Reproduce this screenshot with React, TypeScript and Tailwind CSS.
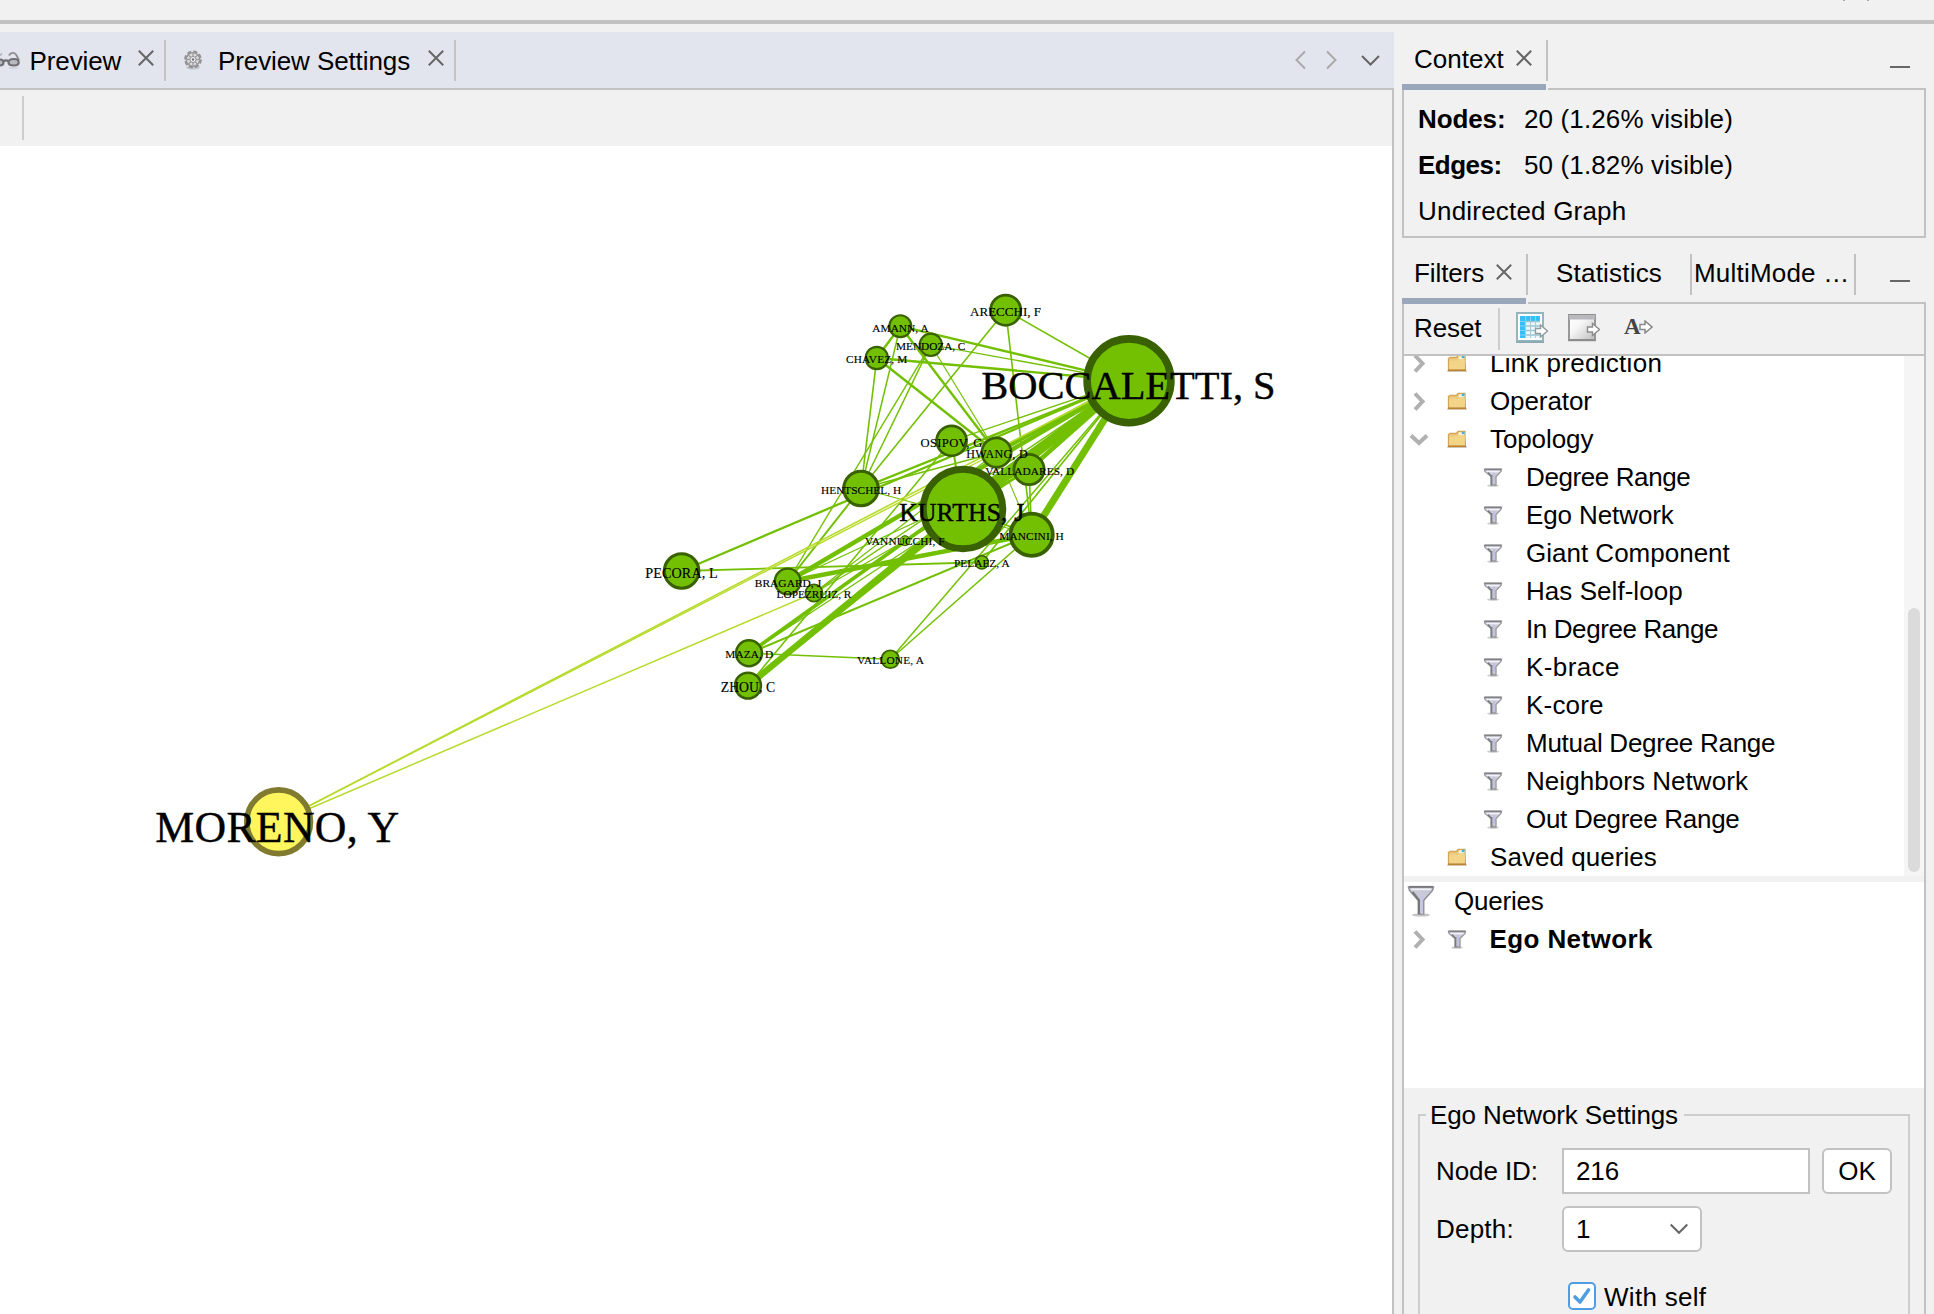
import React from "react";

/* ---------- graph data ---------- */

type GraphNode = {
  id: string;
  x: number;
  y: number;
  r: number;
  stroke: number;
  label: string;
  left: number;
  right: number;
  base: number;
  size: number;
};

const NODES: GraphNode[] = [
  { id: "van", x: 905, y: 540.7, r: 5.5, stroke: 1, label: "VANNUCCHI, F", left: 865, right: 944.5, base: 545.2, size: 11.3 },
  { id: "pel", x: 981.8, y: 562.3, r: 7.4, stroke: 1.5, label: "PELAEZ, A", left: 954, right: 1009.5, base: 567.2, size: 11.3 },
  { id: "are", x: 1005.7, y: 310.2, r: 16.5, stroke: 2.8, label: "ARECCHI, F", left: 970, right: 1041, base: 316.2, size: 13 },
  { id: "ama", x: 900.3, y: 326.2, r: 12, stroke: 2.1, label: "AMANN, A", left: 872.3, right: 928.5, base: 331.5, size: 11.3 },
  { id: "men", x: 930.8, y: 344.8, r: 12.2, stroke: 2.1, label: "MENDOZA, C", left: 896, right: 965.3, base: 350, size: 11.3 },
  { id: "cha", x: 876.8, y: 358, r: 12.2, stroke: 2.1, label: "CHAVEZ, M", left: 846, right: 907.2, base: 363.3, size: 11.3 },
  { id: "osi", x: 951.6, y: 440.8, r: 16.3, stroke: 2.7, label: "OSIPOV, G", left: 920.6, right: 982.3, base: 446.7, size: 12.6 },
  { id: "hwa", x: 996.5, y: 452.5, r: 16, stroke: 2.7, label: "HWANG, D", left: 966.3, right: 1027.5, base: 458.3, size: 12 },
  { id: "val", x: 1029, y: 469.5, r: 16.5, stroke: 2.8, label: "VALLADARES, D", left: 985.3, right: 1074, base: 475, size: 11.3 },
  { id: "hen", x: 861, y: 488.5, r: 18.8, stroke: 3.1, label: "HENTSCHEL, H", left: 821, right: 901, base: 494, size: 11.3 },
  { id: "pec", x: 681.6, y: 571, r: 18.8, stroke: 3.1, label: "PECORA, L", left: 645.3, right: 717.5, base: 577.7, size: 14.2 },
  { id: "bra", x: 787.7, y: 581.5, r: 14, stroke: 2.3, label: "BRAGARD, J", left: 754.8, right: 821, base: 587.3, size: 11.4 },
  { id: "lop", x: 814, y: 593, r: 9.5, stroke: 1.7, label: "LOPEZRUIZ, R", left: 776.6, right: 851.3, base: 597.7, size: 11.3 },
  { id: "maz", x: 749, y: 653.3, r: 14.2, stroke: 2.5, label: "MAZA, D", left: 725.3, right: 773, base: 658.3, size: 11.3 },
  { id: "zho", x: 748, y: 685.6, r: 14.2, stroke: 2.5, label: "ZHOU, C", left: 720.7, right: 775, base: 692, size: 13.7 },
  { id: "vln", x: 890.3, y: 659.3, r: 9.8, stroke: 1.8, label: "VALLONE, A", left: 857, right: 923.7, base: 664.4, size: 11.3 },
  { id: "kur", x: 963, y: 509, r: 43.3, stroke: 7, label: "KURTHS, J", left: 899.3, right: 1024, base: 521.3, size: 25.5 },
  { id: "man", x: 1031.7, y: 534.7, r: 23, stroke: 3.8, label: "MANCINI, H", left: 999.3, right: 1063.7, base: 540.3, size: 11.4 },
  { id: "boc", x: 1129, y: 380.8, r: 45.7, stroke: 7.6, label: "BOCCALETTI, S", left: 981.3, right: 1275.5, base: 399.3, size: 40.5 },
  { id: "mor", x: 278.6, y: 821.7, r: 34.7, stroke: 5.7, label: "MORENO, Y", left: 155.3, right: 399, base: 841.7, size: 43.8 },
];

const EDGES: [string, string, number][] = [
  ["are", "boc", 1.6],
  ["are", "man", 1.6],
  ["are", "hen", 1.6],
  ["ama", "boc", 2.4],
  ["ama", "cha", 2.4],
  ["ama", "hwa", 2.4],
  ["ama", "hen", 1.5],
  ["men", "boc", 1.3],
  ["men", "hwa", 1.2],
  ["men", "hen", 1.5],
  ["men", "bra", 1.4],
  ["cha", "boc", 2.4],
  ["cha", "hwa", 2.4],
  ["cha", "hen", 1.6],
  ["osi", "boc", 1.3],
  ["osi", "kur", 2],
  ["osi", "zho", 1.5],
  ["hwa", "boc", 4],
  ["hwa", "hen", 1.4],
  ["hwa", "man", 1.1],
  ["hwa", "lop", 1.2],
  ["val", "boc", 4.5],
  ["val", "kur", 2.4],
  ["val", "man", 1.6],
  ["val", "bra", 1.2],
  ["hen", "boc", 2.4],
  ["hen", "bra", 2],
  ["hen", "man", 1.1],
  ["kur", "boc", 9.5],
  ["kur", "zho", 6.5],
  ["kur", "man", 1.8],
  ["man", "boc", 7],
  ["man", "bra", 4.5],
  ["man", "maz", 2.1],
  ["man", "vln", 1.5],
  ["pel", "boc", 1.7],
  ["pel", "pec", 1.9],
  ["van", "boc", 1.4],
  ["pec", "boc", 2.3],
  ["bra", "boc", 4.4],
  ["lop", "boc", 1.4],
  ["lop", "val", 1.2],
  ["maz", "boc", 3.8],
  ["maz", "val", 1.2],
  ["maz", "vln", 1.5],
  ["zho", "boc", 3.8],
  ["vln", "boc", 1.5],
  ["mor", "boc", 1.6],
  ["mor", "hwa", 1.4],
  ["mor", "lop", 1.5],
];

const byId = Object.fromEntries(NODES.map((n) => [n.id, n]));

function Graph() {
  return (
    <svg width={1392} height={1168} viewBox="0 146 1392 1168" className="block">
      {EDGES.map(([a, b, w]) => (
        <line
          key={a + b}
          x1={byId[a].x}
          y1={byId[a].y}
          x2={byId[b].x}
          y2={byId[b].y}
          strokeWidth={w}
          stroke={a === "mor" ? "#b7db2c" : "#73c003"}
        />
      ))}
      {NODES.map((n) => (
        <circle
          key={n.id}
          cx={n.x}
          cy={n.y}
          r={n.r - n.stroke / 2}
          fill={n.id === "mor" ? "#fff65d" : "#73c003"}
          stroke={n.id === "mor" ? "#807b2e" : "#396001"}
          strokeWidth={n.stroke}
        />
      ))}
      {NODES.map((n) => (
        <text
          key={n.id}
          x={n.left}
          y={n.base}
          textLength={n.right - n.left}
          fontSize={n.size}
          fill="#000"
          stroke="#000"
          strokeWidth={n.size > 20 ? 0.4 : 0.15}
          fontFamily='"Liberation Serif", "Times New Roman", serif'
        >
          {n.label}
        </text>
      ))}
    </svg>
  );
}

/* ---------- icons ---------- */

const CloseIcon = () => (
  <svg width="16" height="16" viewBox="0 0 16 16" className="shrink-0">
    <path d="M0.8 0.8 15.2 15.2M15.2 0.8 0.8 15.2" stroke="#666" strokeWidth="2" fill="none" />
  </svg>
);

const GlassesIcon = () => (
  <svg width="20" height="20" viewBox="0 0 20 20" className="shrink-0">
    <path d="M9 5.5C10.5 2.5 14 2 16 4.5l3 5.500" stroke="#8b8b90" strokeWidth="1.800" fill="none" />
    <path d="M0 5.500 2 3.500" stroke="#aaa" strokeWidth="1.500" fill="none" />
    <path d="M8.500 12.500c0-3 2-3.500 5.200-3.500s5 .8 5 3.200-2 3.300-5 3.300-5.200-.5-5.200-3zM0 9.500c2 0 3.500 1 3.500 3S2 15.500 0 15.500M3.500 11.500c1.500-1.500 3.500-1.500 5 0" stroke="#6f6f75" strokeWidth="2.200" fill="#b9bbc1" />
    <path d="M9 18h9" stroke="#ced1d8" strokeWidth="1.500" />
  </svg>
);

const GearIcon = () => (
  <svg width="20" height="20" viewBox="0 0 20 20" className="shrink-0">
    <ellipse cx="10" cy="17.500" rx="7" ry="2" fill="#c6c8cf" />
    <circle cx="10" cy="9.500" r="7.600" fill="none" stroke="#939397" strokeWidth="2.600" strokeDasharray="4 1.970" />
    <circle cx="10" cy="9.500" r="6.800" fill="#dcdcde" stroke="#939397" strokeWidth="1.300" />
    <path d="M10 3v13M3.500 9.500h13M5.400 4.900l9.200 9.200M14.600 4.900 5.400 14.100" stroke="#a0a0a4" strokeWidth="1.400" />
    <circle cx="10" cy="9.500" r="3" fill="#f3f3f3" stroke="#929296" />
    <circle cx="10" cy="9.500" r="1.200" fill="#6f6f73" />
  </svg>
);

const FolderIcon = () => (
  <svg width="20" height="20" viewBox="0 0 20 20" className="shrink-0">
    <path d="M0 18.300h20" stroke="#d9d5cf" strokeWidth="1.400" />
    <path d="M1.500 5.500 3 4.500h6.500L11 2.500h7v5l.5 10h-17z" fill="#eecb80" stroke="#d3a657" strokeWidth="1.300" />
    <path d="M11.800 3.300h5.600v3h-5.600z" fill="#fbf3da" />
    <path d="M14.800 2.800h2.700v2.400h-2.700z" fill="#37b6e6" />
    <path d="M2.200 7.800h8.500l1.500-1.300h5.600v9.500H2.200z" fill="#f3d588" />
    <path d="M1 17.300h18" stroke="#b98339" strokeWidth="1.500" />
  </svg>
);

const FunnelIcon = () => (
  <svg width="20" height="20" viewBox="0 0 20 20" className="shrink-0">
    <ellipse cx="10" cy="18.600" rx="6" ry="1.200" fill="#cbcbcb" />
    <path d="M1.500 2.500h17l-.5 2-5 5v8.500H8V9.500l-6-5z" fill="#cdccda" stroke="#97979c" strokeWidth="1.300" />
    <path d="M3.500 4.600h13" stroke="#f4f4f8" strokeWidth="1.400" />
    <path d="M1.500 2.200h17" stroke="#7f7f84" strokeWidth="1.400" />
    <path d="M8.600 8v10M5 5.500l3.500 4" stroke="#7b7b82" strokeWidth="1.600" fill="none" />
    <path d="M11 6v11" stroke="#c3c1e0" strokeWidth="2" />
  </svg>
);

const BigFunnelIcon = () => (
  <svg width="28" height="32" viewBox="0 0 28 32" className="shrink-0">
    <ellipse cx="14" cy="30" rx="9" ry="1.600" fill="#c4c4c4" />
    <path d="M1.500 2h25l-1 3.500-8.800 10V29h-5.400V15.500L2.500 5.500z" fill="#c9c9d5" stroke="#8e8e93" strokeWidth="1.500" />
    <path d="M2 1.800h24" stroke="#77777c" strokeWidth="1.800" />
    <path d="M4 4.400h20" stroke="#f0f0f5" strokeWidth="1.600" />
    <path d="M5.500 7 12 15v14" stroke="#75757c" strokeWidth="2" fill="none" />
    <path d="M15 7v22" stroke="#c7c5e6" strokeWidth="2.200" />
  </svg>
);

const ChevronRight = () => (
  <svg width="20" height="20" viewBox="0 0 20 20" className="shrink-0">
    <path d="M6 2.500 13.500 10.500 6 18.500" stroke="#b0b0b0" strokeWidth="4" fill="none" />
  </svg>
);

const ChevronDown = () => (
  <svg width="20" height="20" viewBox="0 0 20 20" className="shrink-0">
    <path d="M2 6.500 10 14 18 6.500" stroke="#b0b0b0" strokeWidth="4" fill="none" />
  </svg>
);

const ARROW = "M0 3.500h5V0l7 6-7 6V8.500H0z";

const TableIcon = () => (
  <svg width="32" height="32" viewBox="0 0 32 32" className="shrink-0">
    <path d="M1 1h26v28H1z" fill="#fff" stroke="#94b5bb" strokeWidth="2" />
    <path d="M0 30.300h28" stroke="#86a9b0" strokeWidth="1.400" />
    <path d="M4 4h20v22H4z" fill="#eef8fb" />
    <path d="M4 4h20v5H4zM4 4h5v22H4z" fill="#35c0f5" />
    <path d="M9 9.500h15M9 14h15M9 18.500h15M9 23h15" stroke="#9cc3d0" strokeWidth="1.400" />
    <path d="M4 9.500h5M4 14h5M4 18.500h5M4 23h5M9.500 4v5M14.500 4v5M19.500 4v5" stroke="#7fd5f7" strokeWidth="1" />
    <path d="M9.500 9v17M14.500 9v17M19.500 9v17" stroke="#a9cbd6" strokeWidth="1.100" />
    <path d={ARROW} transform="translate(19.500 13)" fill="#fff" stroke="#8f9b9e" strokeWidth="1.400" />
  </svg>
);

const WindowIcon = () => (
  <svg width="32" height="32" viewBox="0 0 32 32" className="shrink-0">
    <defs>
      <linearGradient id="pane" x1="0" y1="0" x2="1" y2="1">
        <stop offset="0" stopColor="#fff" />
        <stop offset="0.400" stopColor="#f6f6f6" />
        <stop offset="1" stopColor="#bdbdbd" />
      </linearGradient>
    </defs>
    <path d="M1 3h26v25H1z" fill="url(#pane)" stroke="#8f8f8f" strokeWidth="1.800" />
    <path d="M1 3h26v4.500H1z" fill="#b9b9bd" />
    <path d="M0 28.500h28" stroke="#8b8b8b" strokeWidth="1.400" />
    <path d={ARROW} transform="translate(19.500 11.500)" fill="#fff" stroke="#8c8c8c" strokeWidth="1.400" />
  </svg>
);

const RenameIcon = () => (
  <span className="flex h-8 w-8 items-center">
    <span className="w-[15px] font-[Liberation_Serif] text-[23px] leading-8 font-bold tracking-[-1px] text-[#444]">A</span>
    <svg width="14" height="14" viewBox="-1 -1 14 14" className="shrink-0">
      <path d={ARROW} fill="#fff" stroke="#8a8a8a" strokeWidth="1.500" />
    </svg>
  </span>
);

/* ---------- building blocks ---------- */

const Sep = ({ className = "" }: { className?: string }) => (
  <div className={`w-0.5 shrink-0 bg-[#c2c2c2] ${className}`} />
);

const MinimizeMark = ({ className = "" }: { className?: string }) => (
  <div className={`h-0.5 w-5 bg-[#666] ${className}`} />
);

type FolderProps = { label: string; tracking?: string; open?: boolean; leaf?: boolean };

function FolderRow({ label, tracking = "", open, leaf }: FolderProps) {
  return (
    <div className="flex h-[38px] shrink-0 items-center pl-[5px]">
      <div className="w-[38px]">{leaf ? null : open ? <ChevronDown /> : <ChevronRight />}</div>
      <FolderIcon />
      <span className={`ml-[23px] ${tracking}`}>{label}</span>
    </div>
  );
}

const FilterRow = ({ label, tracking }: { label: string; tracking: string }) => (
  <div className="flex h-[38px] shrink-0 items-center pl-[79px]">
    <FunnelIcon />
    <span className={`ml-[23px] ${tracking}`}>{label}</span>
  </div>
);

const TOPOLOGY: [string, string][] = [
  ["Degree Range", "tracking-[-0.4px]"],
  ["Ego Network", "tracking-[-0.1px]"],
  ["Giant Component", "tracking-[0px]"],
  ["Has Self-loop", "tracking-[0.05px]"],
  ["In Degree Range", "tracking-[-0.4px]"],
  ["K-brace", "tracking-[0.4px]"],
  ["K-core", "tracking-[0.2px]"],
  ["Mutual Degree Range", "tracking-[-0.27px]"],
  ["Neighbors Network", "tracking-[0.05px]"],
  ["Out Degree Range", "tracking-[-0.3px]"],
];

/* ---------- editor side ---------- */

function EditorArea() {
  return (
    <div className="flex w-[1394px] shrink-0 flex-col">
      <div className="flex h-14 shrink-0 bg-[#e2e5ed]">
        <div className="flex h-14 w-[164px] items-center">
          <GlassesIcon />
          <span className="mt-0.5 ml-[9.5px] w-[108.5px]">Preview</span>
          <div className="-mt-1"><CloseIcon /></div>
        </div>
        <Sep className="mt-2 h-[41px]" />
        <div className="flex h-14 w-[288px] items-center pl-[17px]">
          <GearIcon />
          <span className="mt-0.5 ml-[15px] w-[210px]">Preview Settings</span>
          <div className="-mt-1"><CloseIcon /></div>
        </div>
        <Sep className="mt-2 h-[41px]" />
        <svg width="90" height="56" viewBox="0 0 90 56" className="ml-auto mr-[12px]" fill="none" strokeWidth="2">
          <path d="M13 19.500 4.500 28 13 36.500M35 19.500 43.500 28 35 36.500" stroke="#aaa" />
          <path d="M70 24 78.500 32.500 87 24" stroke="#666" />
        </svg>
      </div>
      <div className="h-0.5 shrink-0 bg-[#c2c2c2]" />
      <div className="flex grow flex-col border-r-2 border-[#c2c2c2]">
        <div className="flex h-14 shrink-0 pt-1.5 pl-[22px]">
          <div className="h-11 w-0.5 bg-[#cdcdcd]" />
        </div>
        <div className="grow bg-white">
          <Graph />
        </div>
      </div>
    </div>
  );
}

/* ---------- context panel ---------- */

function ContextPanel() {
  return (
    <section className="flex h-[206px] shrink-0 flex-col">
      <div className="flex h-14 shrink-0">
        <div className="flex w-36 flex-col">
          <div className="flex h-[52px] items-center pl-3">
            <span className="mt-0.5 w-[102px] tracking-[0px]">Context</span>
            <CloseIcon />
          </div>
        </div>
        <Sep className="mt-2 h-[41px]" />
        <MinimizeMark className="mt-[34px] mr-4 ml-auto" />
      </div>
      <div className="-mt-1 flex h-1.5 shrink-0 items-end">
        <div className="h-1.5 w-36 bg-[#9aa6b9]" />
        <div className="ml-0.5 h-0.5 grow bg-[#c2c2c2]" />
      </div>
      <div className="grow border-x-2 border-b-2 border-[#c2c2c2] pt-[9px] pl-[14px]">
        <div className="flex h-[46px] leading-[40px]">
          <b className="w-[106px] tracking-[-0.1px]">Nodes:</b>
          <span className="tracking-[0.13px]">20 (1.26% visible)</span>
        </div>
        <div className="flex h-[46px] leading-[40px]">
          <b className="w-[106px] tracking-[-0.5px]">Edges:</b>
          <span className="tracking-[0.13px]">50 (1.82% visible)</span>
        </div>
        <div className="leading-[40px] tracking-[0.2px]">Undirected Graph</div>
      </div>
    </section>
  );
}

/* ---------- filters panel ---------- */

function SettingsGroup() {
  return (
    <div className="flex grow flex-col pr-[14px] pl-[14px]">
      <div className="mt-2 flex h-9 shrink-0 items-center">
        <div className="mt-[18px] h-[18px] w-2 border-t-2 border-l-2 border-[#cdcdcd]" />
        <span className="mt-0.5 w-[258px] pl-1">Ego Network Settings</span>
        <div className="mt-[18px] h-[18px] grow border-t-2 border-r-2 border-[#cdcdcd]" />
      </div>
      <div className="flex grow flex-col gap-3 border-x-2 border-[#cdcdcd] pt-4 pl-4">
        <div className="flex h-[46px] shrink-0 items-center">
          <span className="w-[126px]">Node ID:</span>
          <div className="flex h-[46px] w-[248px] items-center border-2 border-[#c2c2c2] bg-white pl-3">216</div>
          <div className="ml-3 flex h-[46px] w-[70px] items-center justify-center rounded-[6px] border-2 border-[#c2c2c2] bg-white">OK</div>
        </div>
        <div className="flex h-[46px] shrink-0 items-center">
          <span className="w-[126px] tracking-[0.2px]">Depth:</span>
          <div className="flex h-[46px] w-[140px] items-center justify-between rounded-[6px] border-2 border-[#c2c2c2] bg-white pr-3 pl-3">
            1
            <svg width="18" height="12" viewBox="0 0 18 12" fill="none">
              <path d="M0.700 1.500 9 9.800 17.300 1.500" stroke="#666" strokeWidth="2" />
            </svg>
          </div>
        </div>
        <div className="mt-[18px] flex h-7 shrink-0 items-center pl-[132px]">
          <div className="flex h-7 w-7 items-center justify-center rounded-[5px] border-2 border-[#4f9ee3] bg-white">
            <svg width="20" height="20" viewBox="0 0 20 20" fill="none">
              <path d="M3 11 8 16 16.500 4" stroke="#4f9ee3" strokeWidth="3.600" strokeLinecap="round" strokeLinejoin="round" />
            </svg>
          </div>
          <span className="mt-0.5 ml-2 tracking-[0.3px]">With self</span>
        </div>
      </div>
    </div>
  );
}

function FiltersPanel() {
  return (
    <section className="flex grow flex-col">
      <div className="mt-2 flex h-14 shrink-0">
        <div className="flex h-[52px] w-[124px] items-center pl-3">
          <span className="mt-0.5 w-[82px]">Filters</span>
          <CloseIcon />
        </div>
        <Sep className="mt-2 h-[41px]" />
        <span className="mt-[7px] w-[162px] pl-7 leading-[40px] tracking-[0.2px]">Statistics</span>
        <Sep className="mt-2 h-[41px]" />
        <span className="mt-[7px] w-[162px] pl-0.5 leading-[40px] tracking-[0.2px] whitespace-nowrap">MultiMode …</span>
        <Sep className="mt-2 h-[41px]" />
        <MinimizeMark className="mt-[34px] mr-4 ml-auto" />
      </div>
      <div className="-mt-1 flex h-1.5 shrink-0 items-end">
        <div className="h-1.5 w-[124px] bg-[#9aa6b9]" />
        <div className="ml-0.5 h-0.5 grow bg-[#c2c2c2]" />
      </div>
      <div className="flex grow flex-col border-x-2 border-[#c2c2c2]">
        <div className="flex h-[52px] shrink-0 items-start border-b-2 border-[#c2c2c2] pt-1 pl-[10px]">
          <span className="w-[84px] leading-[40px]">Reset</span>
          <div className="h-[42px] w-0.5 bg-[#cdcdcd]" />
          <div className="mt-1 ml-4 flex gap-5">
            <TableIcon />
            <WindowIcon />
          </div>
          <div className="mt-[3px] ml-6"><RenameIcon /></div>
        </div>
        <div className="flex h-[520px] shrink-0 bg-white">
          <div className="flex h-[520px] grow flex-col justify-end overflow-hidden">
            <FolderRow label="Link prediction" tracking="tracking-[0.3px]" />
            <FolderRow label="Operator" />
            <FolderRow label="Topology" open />
            {TOPOLOGY.map(([label, tracking]) => (
              <FilterRow key={label} label={label} tracking={tracking} />
            ))}
            <FolderRow label="Saved queries" tracking="tracking-[0.05px]" leaf />
          </div>
          <div className="flex w-5 flex-col items-center bg-[#f5f5f5] pt-[252px]">
            <div className="h-[264px] w-3 rounded-full bg-[#dbdbdb]" />
          </div>
        </div>
        <div className="mt-1.5 h-[206px] shrink-0 bg-white">
          <div className="flex h-[38px] items-center pl-[3px]">
            <BigFunnelIcon />
            <span className="ml-[19px] tracking-[-0.2px]">Queries</span>
          </div>
          <div className="flex h-[38px] items-center pl-[5px]">
            <div className="w-[38px]"><ChevronRight /></div>
            <FunnelIcon />
            <b className="ml-[22.5px] tracking-[0.4px]">Ego Network</b>
          </div>
        </div>
        <SettingsGroup />
      </div>
    </section>
  );
}

export default function App() {
  return (
    <div className="flex h-[1314px] w-[1934px] flex-col overflow-hidden bg-[#f1f1f1] font-[Liberation_Sans,Arial,sans-serif] text-[26px] leading-[38px] tracking-[-0.1px] text-black">
      <div className="flex h-5 shrink-0 justify-end gap-[22px] pr-[65px]">
        <div className="h-px w-0.5 bg-[#aaa]" />
        <div className="h-px w-0.5 bg-[#aaa]" />
      </div>
      <div className="h-1 shrink-0 bg-[#c2c2c2]" />
      <div className="flex grow pt-2">
        <EditorArea />
        <aside className="ml-2 flex w-[524px] shrink-0 flex-col">
          <ContextPanel />
          <FiltersPanel />
        </aside>
      </div>
    </div>
  );
}
